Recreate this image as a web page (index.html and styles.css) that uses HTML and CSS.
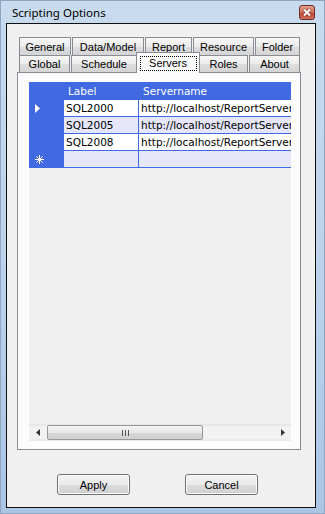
FILE: index.html
```html
<!DOCTYPE html>
<html lang="en">
<head>
    <meta charset="UTF-8">
    <title>Scripting Options</title>
    <link rel="stylesheet" href="styles.css">
</head>
<body>
    <div class="window">
        <div class="titlebar">
            <span class="title">Scripting Options</span>
            <span class="close-btn">
                <svg width="8" height="7" viewBox="0 0 8 7"><path d="M1 0.5 L7 6.5 M7 0.5 L1 6.5" stroke="#fff" stroke-width="2"/></svg>
            </span>
        </div>

        <div class="client">
            <div class="tabs">
                <div class="tab-row row-back">
                    <div class="tab">General</div>
                    <div class="tab">Data/Model</div>
                    <div class="tab">Report</div>
                    <div class="tab">Resource</div>
                    <div class="tab">Folder</div>
                </div>
                <div class="tab-row row-front">
                    <div class="tab">Global</div>
                    <div class="tab">Schedule</div>
                    <div class="tab selected"><span class="focus">Servers</span></div>
                    <div class="tab">Roles</div>
                    <div class="tab">About</div>
                </div>

                <div class="tab-page">
                    <div class="grid">
                        <div class="grid-body">
                            <div class="grid-row header">
                                <div class="row-head"></div>
                                <div class="cell col-label">Label</div>
                                <div class="cell col-server">Servername</div>
                            </div>
                            <div class="grid-row">
                                <div class="row-head">
                                    <svg width="5" height="9" viewBox="0 0 5 9"><path d="M0 0 L5 4.5 L0 9 Z" fill="#fff"/></svg>
                                </div>
                                <div class="cell col-label">SQL2000</div>
                                <div class="cell col-server">http://localhost/ReportServer</div>
                            </div>
                            <div class="grid-row alt">
                                <div class="row-head"></div>
                                <div class="cell col-label">SQL2005</div>
                                <div class="cell col-server">http://localhost/ReportServer</div>
                            </div>
                            <div class="grid-row">
                                <div class="row-head"></div>
                                <div class="cell col-label">SQL2008</div>
                                <div class="cell col-server">http://localhost/ReportServer</div>
                            </div>
                            <div class="grid-row alt">
                                <div class="row-head">
                                    <svg width="9" height="9" viewBox="0 0 9 9"><path d="M4.5 0 V9 M0 4.5 H9 M1.3 1.3 L7.7 7.7 M7.7 1.3 L1.3 7.7" stroke="#fff" stroke-width="1"/></svg>
                                </div>
                                <div class="cell col-label"></div>
                                <div class="cell col-server"></div>
                            </div>
                        </div>

                        <div class="hscroll">
                            <div class="arrow">
                                <svg width="4" height="7" viewBox="0 0 4 7"><path d="M4 0 L0 3.5 L4 7 Z" fill="#333"/></svg>
                            </div>
                            <div class="track">
                                <div class="thumb"><span class="grip"></span></div>
                            </div>
                            <div class="arrow">
                                <svg width="4" height="7" viewBox="0 0 4 7"><path d="M0 0 L4 3.5 L0 7 Z" fill="#333"/></svg>
                            </div>
                        </div>
                    </div>
                </div>
            </div>

            <div class="buttons">
                <button class="btn">Apply</button>
                <button class="btn">Cancel</button>
            </div>
        </div>
    </div>
</body>
</html>
```

FILE: styles.css
```css
html, body {
    margin: 0;
    padding: 0;
    background: #b9d1ea;
}
.window {
    width: 325px;
    height: 514px;
    box-sizing: border-box;
    border: 1px solid #8ea6c2;
    background: linear-gradient(to bottom, #c9dbee, #b9d1ea 60%, #aac6e4);
    display: flex;
    flex-direction: column;
    overflow: hidden;
}
.titlebar {
    height: 22px;
    display: flex;
    align-items: center;
    justify-content: space-between;
    padding: 0 9px 0 11px;
}
.title {
    font-family: "Noto Sans", sans-serif;
    font-size: 11.5px;
    color: #000;
}
.close-btn {
    width: 16px;
    height: 15px;
    box-sizing: border-box;
    border: 1px solid #6e2c22;
    border-radius: 3px;
    background: linear-gradient(to bottom, #e5a494, #d0705c 50%, #bf4530 51%, #d2735c);
    display: flex;
    align-items: center;
    justify-content: center;
    margin-top: 1px;
}
.close-btn svg {
    filter: drop-shadow(0 0 1px #5a1a10);
}
.client {
    flex: 1;
    margin: 0 8px 5px 5px;
    border: 1px solid #101010;
    background: #f0f0f0;
    padding: 13px 14px 0 10px;
}
.tabs {
    width: 284px;
}
.tab-row {
    display: grid;
    column-gap: 1px;
    padding-left: 2px;
}
.row-back {
    grid-template-columns: 52px 72px 47px 61px 45px;
    height: 18px;
}
.row-front {
    grid-template-columns: 51px 66px 60px 49px 51px;
    height: 17px;
}
.tab {
    box-sizing: border-box;
    border: 1px solid #898c95;
    border-bottom: none;
    background: linear-gradient(to bottom, #f7f7f7, #ebebeb 50%, #dedede 51%, #d4d4d4);
    font-family: "Liberation Sans", Arial, sans-serif;
    font-size: 11px;
    color: #000;
    display: flex;
    align-items: center;
    justify-content: center;
}
.tab.selected {
    position: relative;
    z-index: 1;
    margin: -3px -2px -1px;
    background: #fcfcfc;
    align-items: flex-start;
    padding-top: 3px;
}
.focus {
    display: block;
    box-sizing: border-box;
    width: 57px;
    height: 15px;
    line-height: 13px;
    text-align: center;
    border: 1px dotted #000;
}
.tab-page {
    height: 378px;
    box-sizing: border-box;
    border: 1px solid #898c95;
    background: #fcfcfc;
    padding: 9px 9px 8px 11px;
}
.grid {
    width: 262px;
    height: 359px;
    background: #f0f0f0;
    display: flex;
    flex-direction: column;
    overflow: hidden;
}
.grid-body {
    flex: 1;
}
.grid-row {
    display: grid;
    grid-template-columns: 35px 75px 180px;
    height: 17px;
    font-family: "DejaVu Sans", Tahoma, sans-serif;
    font-size: 10.5px;
    color: #000;
}
.grid-row.header {
    height: 18px;
    background: #4169e1;
    color: #fff;
}
.row-head {
    background: #4169e1;
    display: flex;
    align-items: center;
    padding-left: 6px;
}
.cell {
    box-sizing: border-box;
    background: #fff;
    border-right: 1px solid #4169e1;
    border-bottom: 1px solid #4169e1;
    padding-left: 2px;
    line-height: 16px;
    white-space: nowrap;
    overflow: hidden;
}
.grid-row.alt .cell {
    background: #e6e6fa;
}
.header .cell {
    background: #4169e1;
    border-color: #4169e1;
    padding-left: 4px;
    line-height: 18px;
}
.hscroll {
    height: 17px;
    display: flex;
    background: linear-gradient(to bottom, #e3e3e3, #f2f2f2 20%, #f2f2f2 80%, #e8e8e8);
}
.arrow {
    width: 17px;
    display: flex;
    align-items: center;
    justify-content: center;
}
.track {
    flex: 1;
    padding: 1px 0 1px 1px;
}
.thumb {
    width: 156px;
    height: 15px;
    box-sizing: border-box;
    border: 1px solid #979797;
    border-radius: 2px;
    background: linear-gradient(to bottom, #f3f3f3, #e8e8e8 50%, #d7d7d7 51%, #cfcfcf);
    display: flex;
    align-items: center;
    justify-content: center;
}
.grip {
    width: 7px;
    height: 6px;
    background: repeating-linear-gradient(to right, #555 0 1px, transparent 1px 3px);
}
.buttons {
    display: flex;
    gap: 55px;
    padding-left: 40px;
    margin-top: 24px;
}
.btn {
    width: 73px;
    height: 21px;
    padding: 0;
    border: 1px solid #707070;
    border-radius: 3px;
    background: linear-gradient(to bottom, #f2f2f2, #ebebeb 50%, #dddddd 51%, #cfcfcf);
    box-shadow: inset 0 0 0 1px #fcfcfc;
    font-family: "Liberation Sans", Arial, sans-serif;
    font-size: 11px;
    color: #000;
}
```
